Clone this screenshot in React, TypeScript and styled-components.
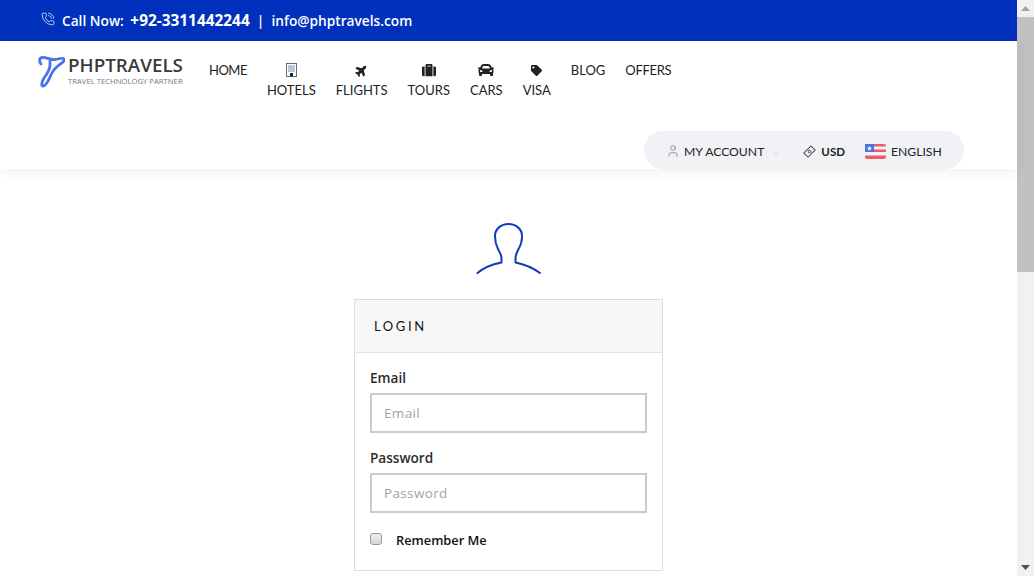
import styled, { createGlobalStyle } from 'styled-components';
import { PhoneCall, User, ChevronDown } from 'lucide-react';
import { FaCar, FaPlane, FaSuitcase, FaTag } from 'react-icons/fa';

const GlobalStyle = createGlobalStyle`
  html, body { margin: 0; padding: 0; height: 100%; overflow: hidden; background: #fff; }
  * { box-sizing: border-box; }
`;

const Page = styled.div`
  display: flex;
  width: 1034px;
  height: 576px;
  overflow: hidden;
  font-family: Lato, "Open Sans", sans-serif;
  color: #222;
`;

const Main = styled.main`
  flex: 1;
  min-width: 0;
  display: flex;
  flex-direction: column;
`;

const TopBar = styled.div`
  height: 41px;
  flex-shrink: 0;
  background: #0031bc;
  color: #fff;
  display: flex;
  align-items: center;
  padding: 0 0 1px 41px;
  font-family: "Open Sans", sans-serif;
  font-size: 13.7px;
  font-weight: 600;
  white-space: pre;

  svg { margin-right: 7px; margin-top: -3px; }
  b { font-weight: 700; font-size: 15.4px; margin-left: 3px; }
`;

const Header = styled.header`
  height: 128px;
  flex-shrink: 0;
  background: #fff;
  box-shadow: 0 2px 14px rgba(0, 0, 0, 0.07);
  display: flex;
  flex-direction: column;
  justify-content: space-between;
  padding: 14px 53px 0 38px;
  position: relative;
`;

const NavRow = styled.div`
  display: flex;
  align-items: flex-start;
`;

const Logo = styled.div`
  width: 147px;
  height: 32px;
  display: flex;
  gap: 3px;
  margin-right: 24px;
`;

const LogoText = styled.div`
  font-family: "Open Sans", sans-serif;
  color: #3a3a3a;
  display: flex;
  flex-direction: column;
`;

const LogoName = styled.span`
  font-size: 18.8px;
  font-weight: 600;
  line-height: 20px;
`;

const LogoTag = styled.span`
  font-size: 7.7px;
  line-height: 9px;
  margin-top: 2px;
  color: #777;
  white-space: nowrap;
`;

const Nav = styled.nav`
  display: flex;
  align-items: flex-start;
  gap: 20px;
`;

const NavItem = styled.a<{ $tracking: number }>`
  display: flex;
  flex-direction: column;
  align-items: center;
  font-size: 13px;
  line-height: 20px;
  color: #222;
  padding-top: 5px;
  letter-spacing: ${({ $tracking }) => $tracking}px;
`;

const NavIcon = styled.span`
  height: 20px;
  display: flex;
  align-items: center;
  justify-content: center;
  font-size: 13px;
`;

const Pill = styled.div`
  align-self: flex-end;
  width: 320px;
  height: 38px;
  border-radius: 19px;
  background: #f0f2f5;
  display: flex;
  align-items: center;
  padding: 2px 0 0 22px;
  font-size: 12.2px;
  color: #222;
`;

const PillItem = styled.span<{ $gap: number; $inner: number }>`
  display: flex;
  align-items: center;
  gap: ${({ $inner }) => $inner}px;
  margin-right: ${({ $gap }) => $gap}px;
`;

const Strong = styled.b`
  font-weight: 700;
  font-size: 11.5px;
`;

const Content = styled.div`
  display: flex;
  flex-direction: column;
  align-items: center;
  padding-top: 53px;
`;

const AvatarWrap = styled.div`
  height: 77px;
  display: flex;
  justify-content: center;
`;

const Card = styled.section`
  width: 309px;
  height: 272px;
  border: 1px solid #dcdcdc;
`;

const CardHead = styled.div`
  height: 53px;
  background: #f7f7f7;
  border-bottom: 1px solid #e4e4e4;
  display: flex;
  align-items: center;
  padding-left: 19px;
  font-size: 13px;
  letter-spacing: 2.6px;
  color: #111;
`;

const CardBody = styled.div`
  padding: 16px 15px 0;
  display: flex;
  flex-direction: column;
`;

const Field = styled.div`
  margin-bottom: 16px;
`;

const Label = styled.label`
  display: block;
  font-family: "Open Sans", sans-serif;
  font-size: 13.6px;
  font-weight: 600;
  line-height: 18px;
  margin-bottom: 6px;
  color: #2c2c2c;
`;

const Input = styled.input`
  display: block;
  width: 277px;
  height: 40px;
  border: 2px solid #cbcbcb;
  padding: 0 12px 1px;
  font-family: "Open Sans", sans-serif;
  font-size: 13.5px;
  outline: none;
  letter-spacing: 0.35px;

  &::placeholder { color: #a4a4a4; opacity: 1; }
`;

const Remember = styled.div`
  display: flex;
  align-items: center;
  gap: 14px;
  margin-top: 2px;
  font-family: "Open Sans", sans-serif;
  font-size: 12.8px;
  font-weight: 600;
  color: #111;
`;

const Check = styled.span`
  width: 12px;
  height: 12px;
  border: 1px solid #9a9a9a;
  border-radius: 3px;
  background: linear-gradient(#eee, #d8d8d8);
  margin-top: -2px;
`;

const Scrollbar = styled.aside`
  width: 17px;
  flex-shrink: 0;
  background: #f1f1f1;
  display: flex;
  flex-direction: column;
  justify-content: space-between;
  height: 100%;
`;

const ScrollEnd = styled.div`
  height: 17px;
  display: flex;
  align-items: center;
  justify-content: center;
`;

const Thumb = styled.div`
  height: 255px;
  background: #c1c1c1;
`;

const ScrollTop = styled.div`
  display: flex;
  flex-direction: column;
`;

const nav = [
  { label: 'HOME', tracking: -0.5 },
  { label: 'HOTELS', icon: 'hotel', tracking: 0 },
  { label: 'FLIGHTS', icon: 'plane', tracking: 0 },
  { label: 'TOURS', icon: 'suitcase', tracking: 0 },
  { label: 'CARS', icon: 'car', tracking: 0 },
  { label: 'VISA', icon: 'tag', tracking: 0 },
  { label: 'BLOG', tracking: 0 },
  { label: 'OFFERS', tracking: -0.3 },
];

function HotelIcon() {
  return (
    <svg width="11" height="14" viewBox="0 0 11 14">
      <rect x="0.5" y="0.5" width="10" height="13" fill="#fff" stroke="#5a6b85" />
      <rect x="2" y="2" width="7" height="7" fill="#b9c6d8" />
      <rect x="4" y="10" width="3" height="3.5" fill="#222" />
    </svg>
  );
}

function navIcon(name?: string) {
  switch (name) {
    case 'hotel':
      return <HotelIcon />;
    case 'plane':
      return <FaPlane style={{ transform: 'rotate(-45deg)' }} size={13} color="#222" />;
    case 'suitcase':
      return <FaSuitcase size={14} color="#222" />;
    case 'car':
      return <FaCar size={16} color="#222" />;
    case 'tag':
      return <FaTag size={11} color="#222" />;
    default:
      return null;
  }
}

function LogoMark() {
  return (
    <svg width="27" height="34" viewBox="0 0 27 34" fill="none" style={{ marginTop: -1 }}>
      <path
        d="M3 10 C1 8 1 4 4 3.500 C8 3 12 6 17 5.500 C21 5 25 3 26 5 C27 7 24 9 21 11 C17 14 14 18 12 23 C10 27 8 32 5 32 C3 32 3.500 28 6 24 C9 20 12 16 12 11 C12 9 12 7 12 5.500"
        stroke="#4a72ea"
        strokeWidth="2.8"
        strokeLinecap="round"
      />
    </svg>
  );
}

function Avatar() {
  return (
    <svg width="66" height="54" viewBox="0 0 66 54" fill="none">
      <path
        d="M1.500 51 C6 47 13 43 25.500 40.500 L25.500 36 C25.500 33 24 31 22 27 C19.500 22 19 18 19 14 C19 7 25 2 32.500 2 C40 2 46 7 46 14 C46 18 45 23 42.500 27 C41 30 39.500 33 39.500 36 L39.500 40.500 C52 43 58.500 47 64 51"
        stroke="#0f3cb8"
        strokeWidth="2"
        strokeLinecap="round"
        strokeLinejoin="round"
      />
    </svg>
  );
}

function Flag() {
  return (
    <svg width="21" height="15" viewBox="0 0 21 15">
      <rect width="21" height="15" rx="2" fill="#f0f2f5" />
      <path d="M0 2 a2 2 0 0 1 2 -2 H19 a2 2 0 0 1 2 2 V2.500 H0Z" fill="#ef5b6b" />
      <rect y="5.500" width="21" height="2.500" fill="#ef5b6b" />
      <path d="M0 11.500 H21 V13 a2 2 0 0 1 -2 2 H2 a2 2 0 0 1 -2 -2Z" fill="#ef5b6b" />
      <rect width="9" height="8" fill="#4a78d8" />
      <path d="M4.500 2 L5.200 3.600 L7 3.800 L5.600 4.900 L6 6.500 L4.500 5.700 L3 6.500 L3.400 4.900 L2 3.800 L3.800 3.600Z" fill="#fff" />
    </svg>
  );
}

function MoneyIcon() {
  return (
    <svg width="13" height="13" viewBox="0 0 13 13" fill="none" stroke="#444">
      <rect x="1.500" y="3.500" width="10" height="6" transform="rotate(-45 6.500 6.500)" />
      <circle cx="6.500" cy="6.500" r="1.300" />
    </svg>
  );
}

export default function App() {
  return (
    <Page>
      <GlobalStyle />
      <Main>
        <TopBar>
          <PhoneCall size={14} strokeWidth={1.2} />
          Call Now: <b>+92-3311442244</b>  |  info@phptravels.com
        </TopBar>
        <Header>
          <NavRow>
            <Logo>
              <LogoMark />
              <LogoText>
                <LogoName>PHPTRAVELS</LogoName>
                <LogoTag>TRAVEL TECHNOLOGY PARTNER</LogoTag>
              </LogoText>
            </Logo>
            <Nav>
              {nav.map(item => (
                <NavItem key={item.label} $tracking={item.tracking}>
                  {item.icon && <NavIcon>{navIcon(item.icon)}</NavIcon>}
                  {item.label}
                </NavItem>
              ))}
            </Nav>
          </NavRow>
          <Pill>
            <PillItem $gap={21} $inner={4}>
              <User size={14} strokeWidth={1} color="#555" />
              MY ACCOUNT
              <ChevronDown size={12} strokeWidth={1} color="#aaa" style={{ marginTop: 3, marginLeft: 2 }} />
            </PillItem>
            <PillItem $gap={20} $inner={5}>
              <MoneyIcon />
              <Strong>USD</Strong>
            </PillItem>
            <PillItem $gap={0} $inner={5}>
              <Flag />
              ENGLISH
            </PillItem>
          </Pill>
        </Header>
        <Content>
          <AvatarWrap>
            <Avatar />
          </AvatarWrap>
          <Card>
            <CardHead>LOGIN</CardHead>
            <CardBody>
              <Field>
                <Label>Email</Label>
                <Input placeholder="Email" />
              </Field>
              <Field>
                <Label>Password</Label>
                <Input placeholder="Password" />
              </Field>
              <Remember>
                <Check />
                Remember Me
              </Remember>
            </CardBody>
          </Card>
        </Content>
      </Main>
      <Scrollbar>
        <ScrollTop>
          <ScrollEnd>
            <svg width="9" height="5" viewBox="0 0 9 5"><path d="M4.500 0 L9 5 H0Z" fill="#a3a3a3" /></svg>
          </ScrollEnd>
          <Thumb />
        </ScrollTop>
        <ScrollEnd>
          <svg width="9" height="5" viewBox="0 0 9 5"><path d="M0 0 H9 L4.500 5Z" fill="#505050" /></svg>
        </ScrollEnd>
      </Scrollbar>
    </Page>
  );
}
